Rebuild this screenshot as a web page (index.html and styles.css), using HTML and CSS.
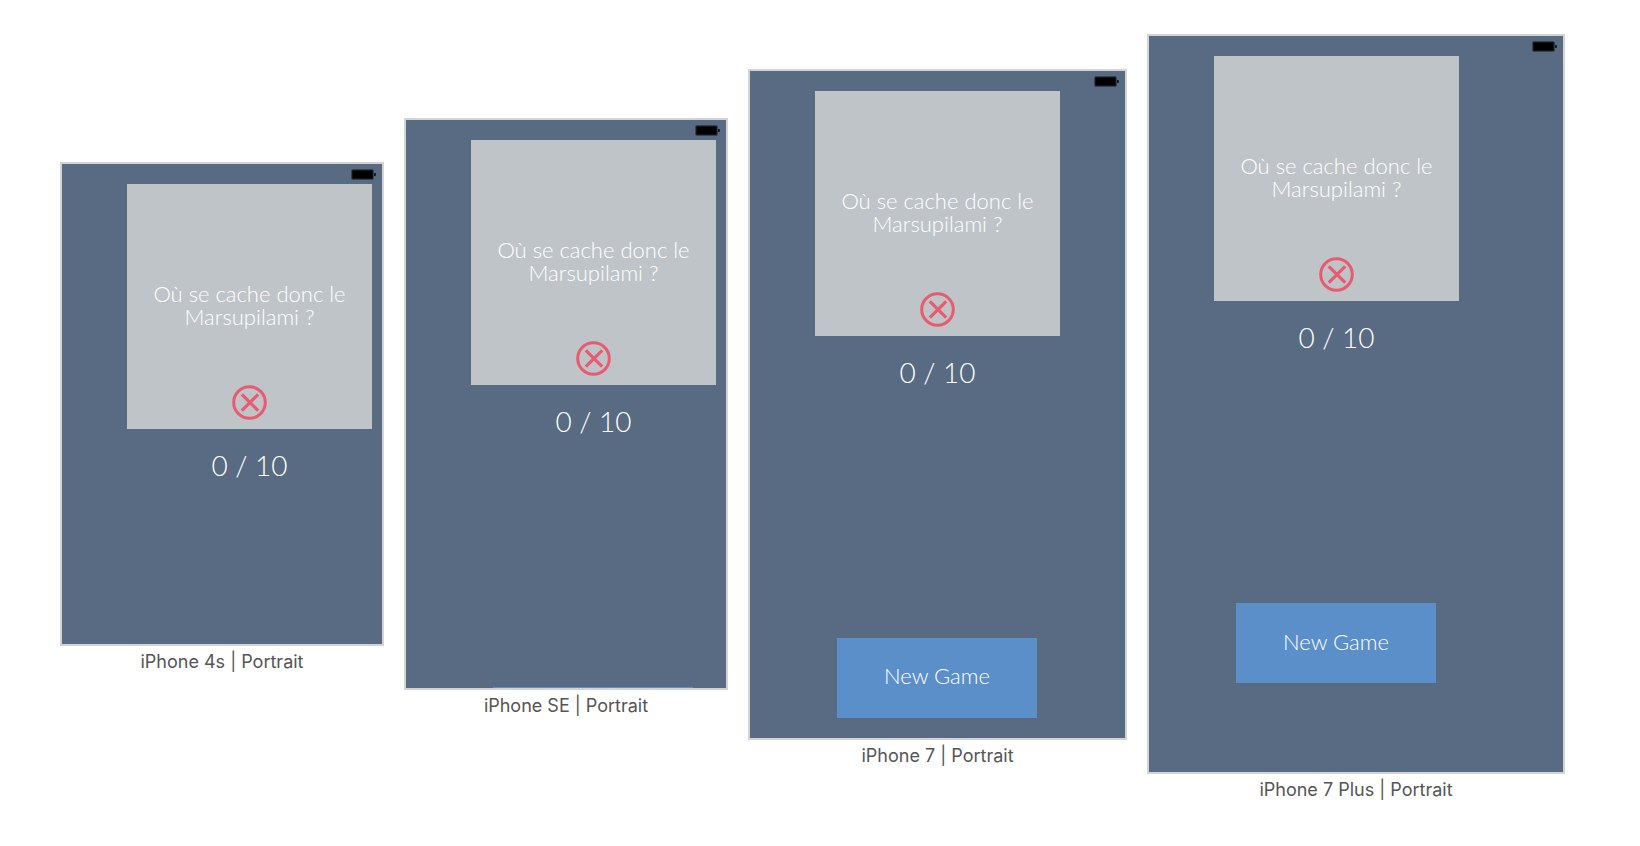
FILE: index.html
```html
<!DOCTYPE html>
<html lang="fr">
<head>
<meta charset="utf-8">
<title>Device previews</title>
<link rel="stylesheet" href="styles.css">
</head>
<body>
<svg class="sprite" aria-hidden="true">
  <symbol id="battery" viewBox="0 0 25 12">
    <rect x="0.5" y="0.5" width="22" height="10" rx="1.5" fill="#1f2935" stroke="#35414f"/>
    <rect x="1.5" y="1.5" width="20" height="8" rx="0.5" fill="#000"/>
    <path d="M23 4h1a1 1 0 0 1 1 1v1a1 1 0 0 1-1 1h-1z" fill="#141a22"/>
  </symbol>
  <symbol id="wrong" viewBox="0 0 35 35">
    <circle cx="17.5" cy="17.500" r="15.800" fill="none" stroke="#e95b70" stroke-width="3"/>
    <path d="M9.800 9.300l16.400 16.400M26.200 9.300l-16.400 16.400" fill="none" stroke="#e95b70" stroke-width="3.200"/>
  </symbol>
</svg>
<main class="previews">
  <figure class="device">
    <div class="screen iphone-4s">
      <div class="status"><svg class="battery"><use href="#battery"/></svg></div>
      <section class="card">
        <p class="question">Où se cache donc le<br>Marsupilami ?</p>
        <svg class="wrong"><use href="#wrong"/></svg>
      </section>
      <p class="score">0 / 10</p>
    </div>
    <figcaption class="caption">iPhone 4s | Portrait</figcaption>
  </figure>
  <figure class="device">
    <div class="screen iphone-se">
      <div class="status"><svg class="battery"><use href="#battery"/></svg></div>
      <section class="card">
        <p class="question">Où se cache donc le<br>Marsupilami ?</p>
        <svg class="wrong"><use href="#wrong"/></svg>
      </section>
      <p class="score">0 / 10</p>
      <button class="new-game" type="button" aria-label="New Game"></button>
    </div>
    <figcaption class="caption">iPhone SE | Portrait</figcaption>
  </figure>
  <figure class="device">
    <div class="screen iphone-7">
      <div class="status"><svg class="battery"><use href="#battery"/></svg></div>
      <section class="card">
        <p class="question">Où se cache donc le<br>Marsupilami ?</p>
        <svg class="wrong"><use href="#wrong"/></svg>
      </section>
      <p class="score">0 / 10</p>
      <button class="new-game" type="button">New Game</button>
    </div>
    <figcaption class="caption">iPhone 7 | Portrait</figcaption>
  </figure>
  <figure class="device">
    <div class="screen iphone-7-plus">
      <div class="status"><svg class="battery"><use href="#battery"/></svg></div>
      <section class="card">
        <p class="question">Où se cache donc le<br>Marsupilami ?</p>
        <svg class="wrong"><use href="#wrong"/></svg>
      </section>
      <p class="score">0 / 10</p>
      <button class="new-game" type="button">New Game</button>
    </div>
    <figcaption class="caption">iPhone 7 Plus | Portrait</figcaption>
  </figure>
</main>
</body>
</html>
```
FILE: styles.css
```css
* { box-sizing: border-box; }

body {
  margin: 0;
  background: #fff;
  font-family: Lato, "Open Sans", sans-serif;
}

.sprite { display: none; }

.previews {
  display: flex;
  flex-wrap: wrap;
  align-items: center;
  gap: 20px;
  padding: 34px 10px 24px 60px;
}

.device { margin: 0; }

/* Screens use the logical point size of each device. */
.screen {
  box-sizing: content-box;
  display: flex;
  flex-direction: column;
  align-items: flex-start;
  overflow: hidden;
  border: 2px solid #d3d3d3;
  background: #586b82;
  color: #fff;
}

.iphone-4s { width: 320px; height: 480px; }
.iphone-se { width: 320px; height: 568px; }
.iphone-7 { width: 375px; height: 667px; }
.iphone-7-plus { width: 414px; height: 736px; }

.status {
  flex: none;
  display: flex;
  align-self: stretch;
  justify-content: flex-end;
  height: 20px;
  padding: 5px 6px 0 0;
}

.battery { width: 25px; height: 12px; }

.card {
  flex: none;
  display: flex;
  flex-direction: column;
  align-items: center;
  justify-content: flex-end;
  gap: 57px;
  width: 245px;
  height: 245px;
  margin-left: 65px;
  padding: 0 20px 9px;
  background: #bfc4c8;
}

.question {
  margin: 0;
  font-size: 22px;
  font-weight: 300;
  line-height: 23px;
  text-align: center;
  white-space: nowrap;
}

.wrong { width: 35px; height: 35px; }

.score {
  flex: none;
  width: 245px;
  height: 282px;
  margin: 20px 0 0 65px;
  font-size: 28px;
  font-weight: 300;
  line-height: 32px;
  text-align: center;
}

.new-game {
  flex: none;
  width: 200px;
  height: 80px;
  margin: 0 0 0 87px;
  padding: 0 0 4px;
  border: 0;
  background: #5b8fc9;
  color: #fff;
  font-family: inherit;
  font-size: 22px;
  font-weight: 300;
}

.caption {
  padding-top: 4px;
  color: #555;
  font-family: Inter, Roboto, sans-serif;
  font-size: 18px;
  line-height: 24px;
  text-align: center;
}
```
